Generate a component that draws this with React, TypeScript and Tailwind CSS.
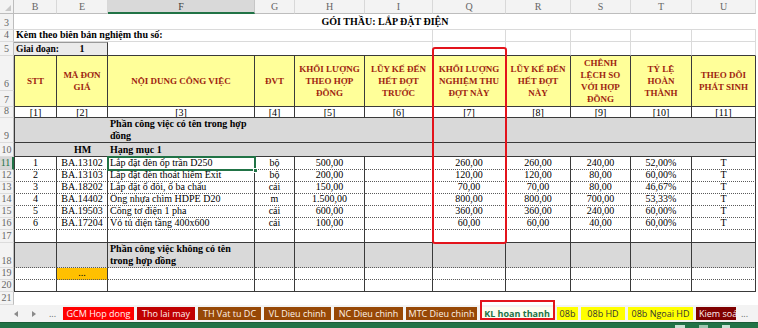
import React from 'react';

type P = { children?: React.ReactNode; className?: string };

function Cell({ children, className = '' }: P) {
  return <div className={`flex min-w-0 overflow-hidden whitespace-nowrap ${className}`}>{children}</div>;
}

function RH({ n, active = false }: { n: number; active?: boolean }) {
  return (
    <div
      className={
        active
          ? 'flex items-end justify-center bg-[#d6d6d6] text-[#217346] border-r-2 border-r-[#217346] border-b border-b-[#cfcfcf] text-[10px] leading-[12px] pr-[1px]'
          : 'flex items-end justify-center bg-[#f3f3f3] text-[#666] border-r border-r-[#bdbdbd] border-b border-b-[#dcdcdc] text-[10px] leading-[12px]'
      }
    >
      {n}
    </div>
  );
}

const letters = ['B', 'E', 'F', 'G', 'H', 'I', 'Q', 'R', 'S', 'T', 'U'];

const data = [
  ['1', 'BA.13102', 'Lắp đặt đèn ốp trần D250', 'bộ', '500,00', '', '260,00', '260,00', '240,00', '52,00%', 'T'],
  ['2', 'BA.13103', 'Lắp đặt đèn thoát hiểm Exit', 'bộ', '200,00', '', '120,00', '120,00', '80,00', '60,00%', 'T'],
  ['3', 'BA.18202', 'Lắp đặt ổ đôi, ổ ba chấu', 'cái', '150,00', '', '70,00', '70,00', '80,00', '46,67%', 'T'],
  ['4', 'BA.14402', 'Ống nhựa chìm HDPE D20', 'm', '1.500,00', '', '800,00', '800,00', '700,00', '53,33%', 'T'],
  ['5', 'BA.19503', 'Công tơ điện 1 pha', 'cái', '600,00', '', '360,00', '360,00', '240,00', '60,00%', 'T'],
  ['6', 'BA.17204', 'Vỏ tủ điện tầng 400x600', 'cái', '100,00', '', '60,00', '60,00', '40,00', '60,00%', 'T'],
];

const headers: React.ReactNode[] = [
  <>STT</>,
  <>MÃ ĐƠN<br />GIÁ</>,
  <>NỘI DUNG CÔNG VIỆC</>,
  <>ĐVT</>,
  <>KHỐI LƯỢNG<br />THEO HỢP<br />ĐỒNG</>,
  <>LŨY KẾ ĐẾN<br />HẾT ĐỢT<br />TRƯỚC</>,
  <>KHỐI LƯỢNG<br />NGHIỆM THU<br />ĐỢT NÀY</>,
  <>LŨY KẾ ĐẾN<br />HẾT ĐỢT<br />NÀY</>,
  <>CHÊNH<br />LỆCH SO<br />VỚI HỢP<br />ĐỒNG</>,
  <>TỶ LỆ<br />HOÀN<br />THÀNH</>,
  <>THEO DÕI<br />PHÁT SINH</>,
];

const tabs = [
  { t: 'GCM Hop dong', c: 'w-[71px] bg-[#ff0000] text-[#fff4f4]' },
  { t: 'Tho lai may', c: 'w-[58px] bg-[#c00000] text-[#fff0f0]' },
  { t: 'TH Vat tu DC', c: 'w-[63px] bg-[#974806] text-[#fff3e8]' },
  { t: 'VL Dieu chinh', c: 'w-[67px] bg-[#974806] text-[#fff3e8]' },
  { t: 'NC Dieu chinh', c: 'w-[69px] bg-[#974806] text-[#fff3e8]' },
  { t: 'MTC Dieu chinh', c: 'w-[71px] bg-[#974806] text-[#fff3e8]' },
  { t: 'KL hoan thanh', c: 'w-[74px] bg-[#fdfdf0] text-[#217346] font-bold' },
  { t: '08b', c: 'w-[21px] bg-[#ffff00] text-[#333]' },
  { t: '08b HD', c: 'w-[44px] bg-[#ffff00] text-[#333]' },
  { t: '08b Ngoai HD', c: 'w-[65px] bg-[#ffff00] text-[#333]' },
  { t: 'Kiem soá', c: 'w-[40px] bg-[#7f0000] text-[#fff0f0] justify-start pl-[3px]' },
];

export default function App() {
  const dataBase =
    'border-r border-b border-r-[#3a3a3a] border-b-[#5a5a5a] [border-bottom-style:dotted] items-end px-[2px] text-[10px] leading-[12px] text-black';
  const dataCell = `bg-white ${dataBase}`;
  const grayCell =
    'bg-[#d9d9d9] border-r border-b border-r-[#3a3a3a] border-b-[#3a3a3a] items-end px-[2px] text-[10px] leading-[12px] text-black';
  const gridCell = 'border-r border-b border-r-[#dadada] border-b-[#dadada]';
  return (
    <div className="relative w-[758px] h-[328px] overflow-hidden bg-white font-['Liberation_Serif',serif] text-black">
      <div className="grid grid-cols-[14px_43px_51px_147px_40px_70px_68px_73px_65px_60px_61px_64px] grid-rows-[14px_16px_12px_14px_35px_16px_11px_25px_14px_13px_12px_12px_12px_12px_12px_13px_25px_12px_12px_13px]">
        {/* column header */}
        <div className="relative bg-[#f3f3f3] border-r border-b border-r-[#bdbdbd] border-b-[#bdbdbd]">
          <div className="absolute right-[2px] bottom-[2px] w-0 h-0 border-l-[6px] border-l-transparent border-b-[6px] border-b-[#c8c8c8]" />
        </div>
        {letters.map((l) =>
          l === 'F' ? (
            <div key={l} className="flex items-center justify-center bg-[#d9d9d9] text-[#3d3d3d] border-r border-r-[#c6c6c6] border-b-2 border-b-[#217346] text-[10px]">
              {l}
            </div>
          ) : (
            <div key={l} className="flex items-center justify-center bg-[#f3f3f3] text-[#666] border-r border-r-[#d8d8d8] border-b border-b-[#bdbdbd] text-[10px]">
              {l}
            </div>
          )
        )}

        {/* row 3 */}
        <RH n={3} />
        <Cell className="col-span-11 items-center justify-center font-bold text-[10px] border-b border-b-[#dadada]">
          GÓI THẦU: LẮP ĐẶT ĐIỆN
        </Cell>

        {/* row 4 */}
        <RH n={4} />
        <Cell className={`col-span-6 items-end pl-[2px] font-bold text-[10px] leading-[12px] ${gridCell}`}>
          Kèm theo biên bản nghiệm thu số:
        </Cell>
        {[0, 1, 2, 3, 4].map((i) => (
          <Cell key={i} className={gridCell} />
        ))}

        {/* row 5 */}
        <RH n={5} />
        <div className="relative z-10 flex items-end whitespace-nowrap pl-[2px] font-bold text-[9.5px] leading-[12px] bg-[#ebebeb] border-b border-b-[#3a3a3a] border-t border-t-[#9a9a9a]">
          Giai đoạn:
        </div>
        <Cell className="items-end justify-center font-bold text-[10px] leading-[12px] bg-[#ebebeb] border-r border-r-[#3a3a3a] border-b border-b-[#3a3a3a] border-t border-t-[#9a9a9a]">
          1
        </Cell>
        <Cell className="col-span-4 border-r border-r-[#dadada] border-b border-b-[#3a3a3a]" />
        {[0, 1, 2, 3, 4].map((i) => (
          <Cell key={i} className="border-r border-r-[#dadada] border-b border-b-[#3a3a3a]" />
        ))}

        {/* rows 6-7 header */}
        <RH n={6} />
        {headers.map((h, i) => (
          <div
            key={i}
            className={`row-span-2 flex items-center justify-center text-center bg-[#ffff99] border-r border-b border-r-[#3a3a3a] border-b-[#3a3a3a] font-bold text-[9px] leading-[12px] text-[#9e2410] whitespace-nowrap ${i === 0 ? 'border-l border-l-[#3a3a3a]' : ''}`}
          >
            <div>{h}</div>
          </div>
        ))}
        <RH n={7} />

        {/* row 8 */}
        <RH n={8} />
        {letters.map((_, i) => (
          <Cell
            key={i}
            className={`items-center justify-center bg-white border-r border-b border-r-[#3a3a3a] border-b-[#3a3a3a] text-[10px] leading-[11px] ${i === 0 ? 'border-l border-l-[#3a3a3a]' : ''}`}
          >
            [{i + 1}]
          </Cell>
        ))}

        {/* row 9 */}
        <RH n={9} />
        <Cell className={`col-span-2 border-l border-l-[#3a3a3a] ${grayCell} border-r-0`} />
        <div className="flex items-end bg-[#d9d9d9] border-b border-b-[#3a3a3a] px-[2px] font-bold text-[10px] leading-[12px]">
          <div>
            Phần công việc có tên trong hợp
            <br />
            đồng
          </div>
        </div>
        <Cell className={`col-span-8 ${grayCell}`} />

        {/* row 10 */}
        <RH n={10} />
        <Cell className={`border-l border-l-[#3a3a3a] ${grayCell} border-r-0`} />
        <Cell className={`${grayCell} border-r-0 justify-center font-bold`}>HM</Cell>
        <Cell className={`${grayCell} border-r-0 font-bold`}>Hạng mục 1</Cell>
        <Cell className={`col-span-8 ${grayCell}`} />

        {/* rows 11-16 */}
        {data.map((row, r) => (
          <React.Fragment key={r}>
            <RH n={11 + r} active={r === 0} />
            {row.map((v, i) => (
              <Cell
                key={i}
                className={`${dataCell} ${i === 2 ? 'justify-start' : 'justify-center'} ${i === 0 ? 'border-l border-l-[#3a3a3a]' : ''}`}
              >
                {v}
              </Cell>
            ))}
          </React.Fragment>
        ))}

        {/* row 17 */}
        <RH n={17} />
        {letters.map((_, i) => (
          <Cell
            key={i}
            className={`bg-white border-r border-b border-r-[#3a3a3a] border-b-[#3a3a3a] ${i === 0 ? 'border-l border-l-[#3a3a3a]' : ''}`}
          />
        ))}

        {/* row 18 */}
        <RH n={18} />
        {letters.map((_, i) =>
          i === 2 ? (
            <div key={i} className={`flex ${grayCell} border-b-[#5a5a5a] [border-bottom-style:dotted] font-bold`}>
              <div>
                Phần công việc không có tên
                <br />
                trong hợp đồng
              </div>
            </div>
          ) : (
            <Cell
              key={i}
              className={`${grayCell} border-b-[#5a5a5a] [border-bottom-style:dotted] ${i === 0 ? 'border-l border-l-[#3a3a3a]' : ''}`}
            />
          )
        )}

        {/* row 19 */}
        <RH n={19} />
        {letters.map((_, i) =>
          i === 1 ? (
            <Cell key={i} className={`bg-[#ffc000] ${dataBase} justify-center items-center text-[7px] text-[#6a5a20]`}>
              ...
            </Cell>
          ) : (
            <Cell key={i} className={`${dataCell} ${i === 0 ? 'border-l border-l-[#3a3a3a]' : ''}`} />
          )
        )}

        {/* row 20 */}
        <RH n={20} />
        {letters.map((_, i) => (
          <Cell
            key={i}
            className={`bg-white border-r border-b border-r-[#3a3a3a] border-b-[#3a3a3a] ${i === 0 ? 'border-l border-l-[#3a3a3a]' : ''}`}
          />
        ))}

        {/* row 21 */}
        <RH n={21} />
        <Cell className="col-span-11 bg-white" />
      </div>

      {/* sheet tabs */}
      <div className="flex h-[17px] items-center bg-[#f3f3f3] font-['Open_Sans',sans-serif] text-[9px]">
        <div className="flex w-[63px] items-center">
          <svg width="4" height="6" viewBox="0 0 4 6" className="ml-[14px]">
            <path d="M4 0 L0 3 L4 6 Z" fill="#8a8a8a" />
          </svg>
          <svg width="4" height="6" viewBox="0 0 4 6" className="ml-[14px]">
            <path d="M0 0 L4 3 L0 6 Z" fill="#8a8a8a" />
          </svg>
          <span className="ml-[13px] text-[#666] leading-[9px]">...</span>
        </div>
        <div className="flex gap-[3px]">
          {tabs.map((t) => (
            <div key={t.t} className={`flex h-[13px] items-center justify-center overflow-hidden whitespace-nowrap leading-[13px] ${t.c}`}>
              {t.t}
            </div>
          ))}
        </div>
        <span className="ml-[5px] text-[#666]">...</span>
      </div>

      {/* status bar */}
      <div className="flex h-[7px] items-center justify-end gap-[14px] border-t border-t-[#1a5c37] bg-[#217346] pr-[28px]">
        <div className="h-[3px] w-[10px] bg-[#c9e2d4]" />
        <div className="h-[3px] w-[9px] bg-[#9cc6ae]" />
        <div className="h-[3px] w-[8px] bg-[#c9e2d4]" />
      </div>

      {/* annotations / selection overlays */}
      <div className="pointer-events-none absolute left-[432px] top-[47px] h-[197px] w-[75px] rounded-[3px] border-2 border-[#e3141c]" />
      <div className="pointer-events-none absolute left-[107px] top-[156px] h-[15px] w-[149px] border-2 border-[#217346]" />
      <div className="pointer-events-none absolute left-[253px] top-[168px] h-[5px] w-[5px] border border-white bg-[#217346]" />
      <div className="pointer-events-none absolute left-[480px] top-[300px] h-[20px] w-[75px] border-2 border-[#e3141c]" />
    </div>
  );
}
